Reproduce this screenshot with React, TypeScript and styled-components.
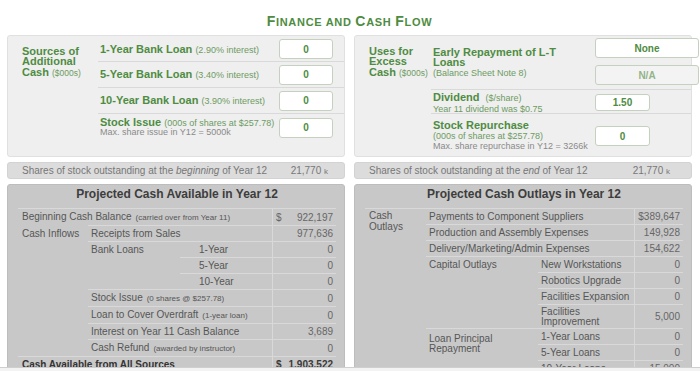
import React from "react";
import styled, { createGlobalStyle } from "styled-components";

const GREEN = "#4e8c42";
const SOFT = "#6d9b62";
const NOTE = "#8a8a8a";
const LINE = "#d9d9d9";

const GlobalStyle = createGlobalStyle`
  html, body { margin: 0; padding: 0; background: #fff; }
  body { font-family: "Liberation Sans", Arial, Helvetica, sans-serif; overflow: hidden; }
  * { box-sizing: border-box; }
`;

const Page = styled.div`
  width: 700px;
  height: 371px;
  overflow: hidden;
  padding: 0 8px 0 7px;
`;

const Title = styled.h1`
  margin: 0;
  height: 35px;
  padding-top: 14px;
  text-align: center;
  font-size: 14px;
  line-height: 14px;
  font-weight: bold;
  letter-spacing: 0.7px;
  color: ${GREEN};
`;

const SmallCap = styled.span`
  font-size: 11px;
`;

const Columns = styled.div`
  display: grid;
  grid-template-columns: 338px 338px;
  grid-template-rows: 122px 17px auto;
  column-gap: 9px;
  row-gap: 5px;
`;

const InputPanel = styled.section<{ $label: number }>`
  display: grid;
  grid-template-columns: ${(p) => p.$label}px 1fr;
  align-items: start;
  height: 122px;
  padding-top: 1px;
  background: #efefef;
  border: 1px solid #e0e0e0;
  border-radius: 3px;
`;

const GroupLabel = styled.div`
  padding: 9px 0 0 14px;
  font-size: 11px;
  line-height: 10.3px;
  font-weight: bold;
  color: ${GREEN};
`;

const Unit = styled.span`
  font-size: 8.5px;
  font-weight: normal;
  color: ${SOFT};
`;

const RowList = styled.div`
  display: flex;
  flex-direction: column;
`;

const InputRow = styled.div<{ $h: number; $box: number; $pr: number; $top?: boolean }>`
  display: grid;
  grid-template-columns: 1fr ${(p) => p.$box}px;
  align-items: ${(p) => (p.$top ? "start" : "center")};
  height: ${(p) => p.$h}px;
  padding: 0 ${(p) => p.$pr}px 0 2px;
  border-bottom: 1px solid ${LINE};
  &:last-child {
    border-bottom: none;
  }
`;

const RowText = styled.div<{ $lh: number; $pt?: number }>`
  font-size: 11px;
  line-height: ${(p) => p.$lh}px;
  padding-top: ${(p) => p.$pt ?? 0}px;
  font-weight: bold;
  color: ${GREEN};
  white-space: nowrap;
`;

const Paren = styled.span`
  font-size: 9px;
  font-weight: normal;
  color: ${SOFT};
`;

const SubNote = styled.div<{ $tone: "soft" | "note" }>`
  font-size: 9px;
  font-weight: normal;
  color: ${(p) => (p.$tone === "soft" ? SOFT : NOTE)};
`;

const BoxStack = styled.div`
  display: flex;
  flex-direction: column;
  gap: 7px;
  padding-top: 1px;
`;

const ValueBox = styled.div<{ $w: number; $h: number; $muted?: boolean }>`
  width: ${(p) => p.$w}px;
  height: ${(p) => p.$h}px;
  display: flex;
  align-items: center;
  justify-content: center;
  background: ${(p) => (p.$muted ? "#f3f3f3" : "#ffffff")};
  border: 1px solid #c5d1bf;
  border-radius: 3px;
  font-size: 10px;
  font-weight: bold;
  color: ${(p) => (p.$muted ? "#93b48a" : GREEN)};
`;

const SharesBar = styled.div<{ $pr: number }>`
  display: flex;
  justify-content: space-between;
  align-items: center;
  height: 17px;
  padding: 0 ${(p) => p.$pr}px 0 14px;
  background: #dcdcdc;
  border: 1px solid #d3d3d3;
  border-radius: 3px;
  font-size: 10px;
  color: #777;
`;

const K = styled.span`
  font-size: 8px;
`;

const ReportPanel = styled.section`
  height: 200px;
  padding: 0 8px 0 10px;
  background: #c8c8c8;
  border: 1px solid #bdbdbd;
  border-radius: 3px;
`;

const ReportTitle = styled.h2`
  margin: 0 0 5px;
  height: 18px;
  line-height: 18px;
  text-align: center;
  font-size: 12px;
  font-weight: bold;
  color: #3d3d3d;
`;

const Sheet = styled.table`
  width: 100%;
  table-layout: fixed;
  border-collapse: separate;
  border-spacing: 0;
  font-size: 10px;
  color: #565656;
`;

const Cell = styled.td<{ $pl?: number; $line?: boolean; $lh?: number; $pt?: number; $pb?: number; $bold?: boolean }>`
  padding: ${(p) => p.$pt ?? 0}px 0 ${(p) => p.$pb ?? 0}px ${(p) => p.$pl ?? 4}px;
  border-top: ${(p) => (p.$line === false ? "1px solid transparent" : `1px solid ${LINE}`)};
  line-height: ${(p) => p.$lh ?? 15}px;
  vertical-align: top;
  white-space: nowrap;
  overflow: hidden;
  font-weight: ${(p) => (p.$bold ? "bold" : "normal")};
  color: ${(p) => (p.$bold ? "#343434" : "#565656")};
`;

const Tiny = styled.span`
  margin-left: 4px;
  font-size: 8px;
`;

const Amount = styled.td<{ $bold?: boolean }>`
  padding: 0 3px;
  border-top: 1px solid ${LINE};
  border-left: 1px solid ${LINE};
  line-height: 15px;
  text-align: right;
  vertical-align: middle;
  white-space: nowrap;
  font-weight: ${(p) => (p.$bold ? "bold" : "normal")};
  color: ${(p) => (p.$bold ? "#3a3a3a" : "#666")};
`;

const Money = styled.div`
  display: flex;
  justify-content: space-between;
`;

const ScrollStrip = styled.div`
  position: fixed;
  left: 0;
  right: 0;
  bottom: 0;
  height: 4px;
  background: #f3f3f3;
  border-top: 1px solid #cfcfcf;
`;

function CashAvailable() {
  return (
    <ReportPanel>
      <ReportTitle>Projected Cash Available in Year 12</ReportTitle>
      <Sheet>
        <colgroup>
          <col style={{ width: 70 }} />
          <col style={{ width: 92 }} />
          <col style={{ width: 92 }} />
          <col style={{ width: 64 }} />
        </colgroup>
        <tbody>
          <tr>
            <Cell colSpan={3}>
              Beginning Cash Balance<Tiny>(carried over from Year 11)</Tiny>
            </Cell>
            <Amount>
              <Money>
                <span>$</span>
                <span>922,197</span>
              </Money>
            </Amount>
          </tr>
          <tr>
            <Cell rowSpan={8} $line={false}>
              Cash Inflows
            </Cell>
            <Cell colSpan={2} $pl={3}>
              Receipts from Sales
            </Cell>
            <Amount>977,636</Amount>
          </tr>
          <tr>
            <Cell rowSpan={3} $pl={3}>
              Bank Loans
            </Cell>
            <Cell $pl={19}>1-Year</Cell>
            <Amount>0</Amount>
          </tr>
          <tr>
            <Cell $pl={19}>5-Year</Cell>
            <Amount>0</Amount>
          </tr>
          <tr>
            <Cell $pl={19}>10-Year</Cell>
            <Amount>0</Amount>
          </tr>
          <tr>
            <Cell colSpan={2} $pl={3}>
              Stock Issue<Tiny>(0 shares @ $257.78)</Tiny>
            </Cell>
            <Amount>0</Amount>
          </tr>
          <tr>
            <Cell colSpan={2} $pl={3}>
              Loan to Cover Overdraft<Tiny>(1-year loan)</Tiny>
            </Cell>
            <Amount>0</Amount>
          </tr>
          <tr>
            <Cell colSpan={2} $pl={3}>
              Interest on Year 11 Cash Balance
            </Cell>
            <Amount>3,689</Amount>
          </tr>
          <tr>
            <Cell colSpan={2} $pl={3}>
              Cash Refund<Tiny>(awarded by instructor)</Tiny>
            </Cell>
            <Amount>0</Amount>
          </tr>
          <tr>
            <Cell colSpan={3} $bold>
              Cash Available from All Sources
            </Cell>
            <Amount $bold>
              <Money>
                <span>$</span>
                <span>1,903,522</span>
              </Money>
            </Amount>
          </tr>
        </tbody>
      </Sheet>
    </ReportPanel>
  );
}

function CashOutlays() {
  return (
    <ReportPanel>
      <ReportTitle>Projected Cash Outlays in Year 12</ReportTitle>
      <Sheet>
        <colgroup>
          <col style={{ width: 61 }} />
          <col style={{ width: 112 }} />
          <col style={{ width: 96 }} />
          <col style={{ width: 49 }} />
        </colgroup>
        <tbody>
          <tr>
            <Cell rowSpan={7} $lh={11} $pt={1}>
              Cash
              <br />
              Outlays
            </Cell>
            <Cell colSpan={2} $pl={3}>
              Payments to Component Suppliers
            </Cell>
            <Amount>$389,647</Amount>
          </tr>
          <tr>
            <Cell colSpan={2} $pl={3}>
              Production and Assembly Expenses
            </Cell>
            <Amount>149,928</Amount>
          </tr>
          <tr>
            <Cell colSpan={2} $pl={3}>
              Delivery/Marketing/Admin Expenses
            </Cell>
            <Amount>154,622</Amount>
          </tr>
          <tr>
            <Cell rowSpan={4} $pl={3}>
              Capital Outlays
            </Cell>
            <Cell $pl={3}>New Workstations</Cell>
            <Amount>0</Amount>
          </tr>
          <tr>
            <Cell $pl={3}>Robotics Upgrade</Cell>
            <Amount>0</Amount>
          </tr>
          <tr>
            <Cell $pl={3}>Facilities Expansion</Cell>
            <Amount>0</Amount>
          </tr>
          <tr>
            <Cell $pl={3} $lh={10} $pt={2} $pb={1}>
              Facilities
              <br />
              Improvement
            </Cell>
            <Amount>5,000</Amount>
          </tr>
          <tr>
            <Cell rowSpan={3} $line={false} />
            <Cell rowSpan={3} $pl={3} $lh={9.5} $pt={5}>
              Loan Principal
              <br />
              Repayment
            </Cell>
            <Cell $pl={3}>1-Year Loans</Cell>
            <Amount>0</Amount>
          </tr>
          <tr>
            <Cell $pl={3}>5-Year Loans</Cell>
            <Amount>0</Amount>
          </tr>
          <tr>
            <Cell $pl={3}>10-Year Loans</Cell>
            <Amount>15,000</Amount>
          </tr>
        </tbody>
      </Sheet>
    </ReportPanel>
  );
}

export default function App() {
  return (
    <Page>
      <GlobalStyle />
      <Title>
        F<SmallCap>INANCE AND </SmallCap>C<SmallCap>ASH </SmallCap>F<SmallCap>LOW</SmallCap>
      </Title>
      <Columns>
        <InputPanel $label={90}>
          <GroupLabel>
            Sources of
            <br />
            Additional
            <br />
            Cash <Unit>($000s)</Unit>
          </GroupLabel>
          <RowList>
            <InputRow $h={25} $box={54} $pr={11}>
              <RowText $lh={10}>
                1-Year Bank Loan <Paren>(2.90% interest)</Paren>
              </RowText>
              <ValueBox $w={54} $h={20}>0</ValueBox>
            </InputRow>
            <InputRow $h={26} $box={54} $pr={11}>
              <RowText $lh={10}>
                5-Year Bank Loan <Paren>(3.40% interest)</Paren>
              </RowText>
              <ValueBox $w={54} $h={20}>0</ValueBox>
            </InputRow>
            <InputRow $h={26} $box={54} $pr={11}>
              <RowText $lh={10}>
                10-Year Bank Loan <Paren>(3.90% interest)</Paren>
              </RowText>
              <ValueBox $w={54} $h={20}>0</ValueBox>
            </InputRow>
            <InputRow $h={27} $box={54} $pr={11}>
              <RowText $lh={9.5}>
                Stock Issue <Paren>(000s of shares at $257.78)</Paren>
                <SubNote $tone="note">Max. share issue in Y12 = 5000k</SubNote>
              </RowText>
              <ValueBox $w={54} $h={20}>0</ValueBox>
            </InputRow>
          </RowList>
        </InputPanel>

        <InputPanel $label={76}>
          <GroupLabel>
            Uses for
            <br />
            Excess
            <br />
            Cash <Unit>($000s)</Unit>
          </GroupLabel>
          <RowList>
            <InputRow $h={53} $box={96} $pr={0} $top>
              <RowText $lh={10.3} $pt={10}>
                Early Repayment of L-T
                <br />
                Loans
                <SubNote $tone="soft">(Balance Sheet Note 8)</SubNote>
              </RowText>
              <BoxStack>
                <ValueBox $w={104} $h={20}>None</ValueBox>
                <ValueBox $w={104} $h={20} $muted>
                  N/A
                </ValueBox>
              </BoxStack>
            </InputRow>
            <InputRow $h={24} $box={96} $pr={0}>
              <RowText $lh={10.5} $pt={2}>
                Dividend&nbsp; <Paren>($/share)</Paren>
                <SubNote $tone="soft">Year 11 dividend was $0.75</SubNote>
              </RowText>
              <ValueBox $w={55} $h={17}>1.50</ValueBox>
            </InputRow>
            <InputRow $h={44} $box={96} $pr={0}>
              <RowText $lh={10.5}>
                Stock Repurchase
                <SubNote $tone="soft">(000s of shares at $257.78)</SubNote>
                <SubNote $tone="note">Max. share repurchase in Y12 = 3266k</SubNote>
              </RowText>
              <ValueBox $w={55} $h={20}>0</ValueBox>
            </InputRow>
          </RowList>
        </InputPanel>

        <SharesBar $pr={16}>
          <span>
            Shares of stock outstanding at the <i>beginning</i> of Year 12
          </span>
          <span>
            21,770 <K>k</K>
          </span>
        </SharesBar>
        <SharesBar $pr={21}>
          <span>
            Shares of stock outstanding at the <i>end</i> of Year 12
          </span>
          <span>
            21,770 <K>k</K>
          </span>
        </SharesBar>

        <CashAvailable />
        <CashOutlays />
      </Columns>
      <ScrollStrip />
    </Page>
  );
}
